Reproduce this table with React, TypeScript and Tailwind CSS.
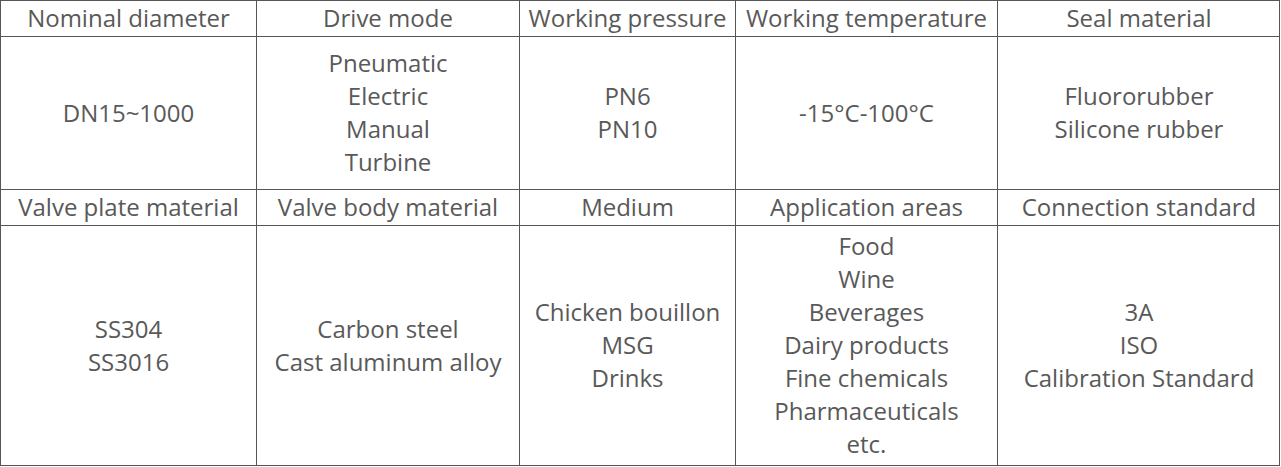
import React from 'react';

const headRow1 = ['Nominal diameter', 'Drive mode', 'Working pressure', 'Working temperature', 'Seal material'];
const bodyRow1 = [
  ['DN15~1000'],
  ['Pneumatic', 'Electric', 'Manual', 'Turbine'],
  ['PN6', 'PN10'],
  ['-15°C-100°C'],
  ['Fluororubber', 'Silicone rubber'],
];
const headRow2 = ['Valve plate material', 'Valve body material', 'Medium', 'Application areas', 'Connection standard'];
const bodyRow2 = [
  ['SS304', 'SS3016'],
  ['Carbon steel', 'Cast aluminum alloy'],
  ['Chicken bouillon', 'MSG', 'Drinks'],
  ['Food', 'Wine', 'Beverages', 'Dairy products', 'Fine chemicals', 'Pharmaceuticals', 'etc.'],
  ['3A', 'ISO', 'Calibration Standard'],
];

const Cell = ({ lines }: { lines: string[] }) => (
  <div className="flex flex-col items-center justify-center border-l border-t border-[#555] pb-[2px] text-center whitespace-nowrap">
    {lines.map((l, i) => (
      <span key={i}>{l}</span>
    ))}
  </div>
);

export default function App() {
  return (
    <div className="bg-white w-[1281px] h-[467px]">
      <div
        className="grid w-[1280px] grid-cols-[256px_263px_216px_262px_283px] grid-rows-[36px_153px_36px_240px] border-r border-b border-[#555] text-[24px] leading-[33px] text-[#595959]"
        style={{ fontFamily: '"Open Sans", "Noto Sans", sans-serif' }}
      >
        {headRow1.map((h) => (
          <Cell key={h} lines={[h]} />
        ))}
        {bodyRow1.map((c, i) => (
          <Cell key={'a' + i} lines={c} />
        ))}
        {headRow2.map((h) => (
          <Cell key={h} lines={[h]} />
        ))}
        {bodyRow2.map((c, i) => (
          <Cell key={'b' + i} lines={c} />
        ))}
      </div>
    </div>
  );
}
